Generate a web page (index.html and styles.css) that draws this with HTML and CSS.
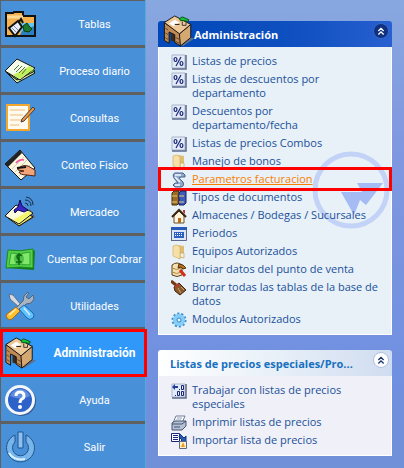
FILE: index.html
```html
<!DOCTYPE html>
<html lang="es">
<head>
    <meta charset="UTF-8">
    <meta name="viewport" content="width=device-width, initial-scale=1.0">
    <title>Administración</title>
    <link rel="stylesheet" href="styles.css">
</head>
<body>
    <!-- Shared drawings -->
    <svg class="defs" width="0" height="0">
        <symbol id="desk" viewBox="0 0 32 34">
            <path d="M18 32l11-8 4 1-12 8z" fill="#5c708f"/>
            <path d="M5 17l8 4v8l-5-2V19z" fill="#3a2a1c"/>
            <path d="M1 8v19l5 3V18l6 3v8l6 4V20z" fill="#c08a55" stroke="#111"/>
            <path d="M17 20l12-10v14l-11 9z" fill="#d5a771" stroke="#111"/>
            <path d="M1 8l11-7 17 9-12 10z" fill="#edc795" stroke="#111"/>
            <path d="M6 9l6-4 5 3-6 4z" fill="#fff"/>
            <path d="M12 10h5" stroke="#111"/>
            <path d="M17 4l3-2 7 3-1 2-4-1-4 0z" fill="#12c43a" stroke="#064d14"/>
            <path d="M20 7v4h4V8" fill="none" stroke="#333"/>
            <path d="M2 14l3 2M2 19l3 2M2 24l3 2M13 24l4 2M13 28l4 2" stroke="#6b4420"/>
        </symbol>
        <symbol id="percent" viewBox="0 0 16 16">
            <path d="M1 1h13v13H1z" fill="#e4eaf6" stroke="#a9b6cd"/>
            <path d="M1 15h14V1" fill="none" stroke="#5c6b8c" stroke-width="1.5"/>
            <path d="M10 3L5 12" stroke="#17267a" stroke-width="1.2"/>
            <ellipse cx="4.5" cy="5.5" rx="1.4" ry="2" fill="none" stroke="#17267a" stroke-width="1.2"/>
            <ellipse cx="10.5" cy="9.5" rx="1.4" ry="2" fill="none" stroke="#17267a" stroke-width="1.2"/>
        </symbol>
        <symbol id="folder" viewBox="0 0 16 16">
            <path d="M7 1l6 1v11l-6 2z" fill="#dfbd70"/>
            <path d="M9 9h4v5l-4-1z" fill="#f4f0da" stroke="#b99955" stroke-width=".6"/>
            <path d="M2 2l4-1 3 2v12l-7-3z" fill="#f6e0a8" stroke="#d3b064" stroke-width=".7"/>
        </symbol>
        <symbol id="chevrons" viewBox="0 0 16 16">
            <path d="M5 8l3-3 3 3M5 12l3-3 3 3" fill="none" stroke="currentColor" stroke-width="1.6"/>
        </symbol>
    </svg>

    <nav class="sidebar">
        <button class="menu-item" type="button">
            <svg class="menu-icon" viewBox="0 0 32 32">
                <path d="M2 5h7l1-1h9v4h12v20H2z" fill="#f4b251" stroke="#111" stroke-width="2"/>
                <path d="M3 9h16" stroke="#ffd995" stroke-width="3"/>
                <path d="M17 15h13v12H17z" fill="#63c7f2"/>
                <path d="M18 23l12-5v9H16z" fill="#2b7fc0"/>
                <path d="M5 20l9-7 4 6-7 9z" fill="#e8edf8" stroke="#111" stroke-width="2"/>
                <path d="M8 20l5 5M10 18l4 4" stroke="#7c8cae"/>
                <path d="M15 14l2-3 2 4" fill="none" stroke="#111" stroke-width="2"/>
                <path d="M19 18l4-3 2 3 3 3-3 3-5-1z" fill="#1d7a2c" stroke="#0a3d12"/>
            </svg>
            <span class="menu-text">Tablas</span>
        </button>
        <button class="menu-item" type="button">
            <svg class="menu-icon" viewBox="0 0 32 32">
                <path d="M3 18l19-9 9 9-18 10z" fill="#cde8a8" stroke="#111"/>
                <path d="M2 17l12-12 17 11-18 9z" fill="#8fd14a" stroke="#111"/>
                <path d="M1 16L13 4l18 9-15 12z" fill="#f4fbe8" stroke="#111"/>
                <path d="M9 20l17-9 4 3-14 10z" fill="#c4ef5c"/>
                <path d="M10 15l5-5M12 17l6-6M15 18l6-6M18 19l4-5" stroke="#53704a"/>
            </svg>
            <span class="menu-text">Proceso diario</span>
        </button>
        <button class="menu-item" type="button">
            <svg class="menu-icon" viewBox="0 0 32 32">
                <path d="M3 3h22v25H3z" fill="#fffaf0" stroke="#f3a72f" stroke-width="2"/>
                <path d="M6 8h15M6 13h13M6 18h15M6 23h9" stroke="#eebc76"/>
                <path d="M29 5L18 17l-1 3 3-1L31 7z" fill="#e89546" stroke="#4b3b35"/>
            </svg>
            <span class="menu-text">Consultas</span>
        </button>
        <button class="menu-item" type="button">
            <svg class="menu-icon" viewBox="0 0 32 32">
                <path d="M1 15L16 1l15 18-14 12z" fill="#fdf6dc" stroke="#111"/>
                <path d="M1 15L16 1l2 3L4 18z" fill="#222"/>
                <path d="M8 20l12-12M11 23l12-12M15 27l11-11" stroke="#c6d0c2"/>
                <path d="M12 14q3-4 8-3" fill="none" stroke="#ef4fa0" stroke-width="1.5"/>
                <path d="M14 19q6-4 10-2l7 4v6l-8-1q-7 0-8-3l5-1-6-1z" fill="#f0a477" stroke="#4e2416"/>
                <path d="M13 19l9-1" stroke="#111" stroke-width="2"/>
            </svg>
            <span class="menu-text">Conteo Fisico</span>
        </button>
        <button class="menu-item" type="button">
            <svg class="menu-icon" viewBox="0 0 32 32">
                <path d="M8 24l18-11 5 8-15 9z" fill="#5b6575"/>
                <path d="M4 22l14-8 11 7-14 9z" fill="#e9e56a" stroke="#111"/>
                <path d="M1 20L12 9l17 8-14 11z" fill="#fafadc" stroke="#111"/>
                <path d="M9 24l16-9 3 2-13 10z" fill="#f5f56a"/>
                <path d="M16 4l2 6 6 4-4 2-6-2-3 3-1-3 4-3z" fill="#3b25c8" stroke="#10084e"/>
                <path d="M21 7q3 0 3 3M21 4q6 0 6 6M22 1q7 1 7 8" fill="none" stroke="#1d2a44"/>
            </svg>
            <span class="menu-text">Mercadeo</span>
        </button>
        <button class="menu-item" type="button">
            <svg class="menu-icon" viewBox="0 0 32 32">
                <path d="M2 25l28 2 1-19-2-1z" fill="#157c19"/>
                <path d="M4 7q12 2 25-1v19q-13-2-27 0z" fill="#55cf49" stroke="#178c1c"/>
                <path d="M7 10q9 2 19-1v13q-10-1-21 0z" fill="#82e66c" stroke="#2ba52c"/>
                <ellipse cx="15" cy="16" rx="5" ry="6" fill="#4cc244"/>
                <path d="M18 13q-2-2-4-1t0 4 3 3-5 0M15 10v12" fill="none" stroke="#0e6614" stroke-width="1.6"/>
            </svg>
            <span class="menu-text">Cuentas por Cobrar</span>
        </button>
        <button class="menu-item" type="button">
            <svg class="menu-icon" viewBox="0 0 32 32">
                <path d="M5 4l4 1 9 11-2 2L6 9z" fill="#d3dae4" stroke="#617086"/>
                <path d="M24 2l-4 4-1 5-7 7 3 3 7-7 5-1 3-4-1-4-4 4-3-2 3-4z" fill="#a9b4c3" stroke="#56657c"/>
                <path d="M12 17l4 4-8 8q-3 2-5-1-2-2 0-4z" fill="#ffc22e" stroke="#a86a12"/>
                <path d="M15 19l5-4 9 8q2 2 0 5-3 3-6 0z" fill="#62c2ff" stroke="#1668b0"/>
                <path d="M5 25l7-6M20 18l6 7" stroke="#fff" stroke-width="1.5" opacity=".7"/>
            </svg>
            <span class="menu-text">Utilidades</span>
        </button>
        <button class="menu-item active" type="button">
            <svg class="menu-icon"><use href="#desk"/></svg>
            <span class="menu-text">Administración</span>
        </button>
        <button class="menu-item" type="button">
            <svg class="menu-icon" viewBox="0 0 32 32">
                <circle cx="17" cy="17" r="15" fill="#345a92"/>
                <circle cx="16" cy="16" r="15" fill="#f3f6fb"/>
                <circle cx="16" cy="16" r="12" fill="#2d62c8"/>
                <path d="M6 12q3-7 10-7t10 7q-8 5-20 0z" fill="#5f8ee0"/>
                <path d="M12 12q0-4 4-4t4 4q0 2-2 3t-2 4" fill="none" stroke="#fff" stroke-width="3"/>
                <circle cx="16" cy="23" r="2" fill="#fff"/>
            </svg>
            <span class="menu-text">Ayuda</span>
        </button>
        <button class="menu-item" type="button">
            <svg class="menu-icon" viewBox="0 0 32 32">
                <path d="M11 4A14 14 0 1 0 22 4v7A8 8 0 1 1 11 11z" fill="#78b5ea" stroke="#20558f"/>
                <path d="M5 22q5 8 16 6" fill="none" stroke="#d6f0ff" stroke-width="2"/>
                <path d="M14 1h5v16h-5z" fill="#8cc0f0" stroke="#20558f"/>
            </svg>
            <span class="menu-text">Salir</span>
        </button>
    </nav>

    <main class="content">
        <section class="panel panel-main">
            <header class="panel-header">
                <svg class="header-icon"><use href="#desk"/></svg>
                <h2>Administración</h2>
                <button class="toggle" type="button" aria-label="Contraer"><svg><use href="#chevrons"/></svg></button>
            </header>
            <div class="panel-body">
                <svg class="watermark" viewBox="0 0 78 78">
                    <circle cx="39" cy="39" r="36" fill="none" stroke="#c3d2f7" stroke-width="5"/>
                    <path d="M45 32h26L54 54l-6-5-6 15-13-23h21z" fill="#a4bbf4"/>
                </svg>
                <ul class="links">
                    <li><svg><use href="#percent"/></svg><a href="#">Listas de precios</a></li>
                    <li><svg><use href="#percent"/></svg><a href="#">Listas de descuentos por departamento</a></li>
                    <li><svg><use href="#percent"/></svg><a href="#">Descuentos por departamento/fecha</a></li>
                    <li><svg><use href="#percent"/></svg><a href="#">Listas de precios Combos</a></li>
                    <li><svg><use href="#folder"/></svg><a href="#">Manejo de bonos</a></li>
                    <li class="current">
                        <svg viewBox="0 0 16 16">
                            <path d="M4 1h8l2 2v2h-4l-2 1 4 4q2 5-3 5H4l-2-2 2-2h3L3 6Q1 2 4 1z" fill="#8fa9cc" stroke="#4a6186"/>
                            <path d="M4 3h6M4 5l5 5M4 13h5" stroke="#f2f7ff" stroke-width="1.5"/>
                        </svg>
                        <a href="#">Parametros facturacion</a>
                    </li>
                    <li>
                        <svg viewBox="0 0 16 16">
                            <path d="M1 3l2-2h5v12l-2 2H1z" fill="#9a6b26" stroke="#3f2c14"/>
                            <path d="M8 3l2-2h5v12l-2 2H8z" fill="#3b5bbd" stroke="#14235c"/>
                            <path d="M1 6h5M1 12h5M8 6h5M8 12h5" stroke="#e9ce72"/>
                        </svg>
                        <a href="#">Tipos de documentos</a>
                    </li>
                    <li>
                        <svg viewBox="0 0 16 16">
                            <path d="M3 8l5-5 5 5v7H3z" fill="#fff3d8" stroke="#6b5030"/>
                            <path d="M1 9l7-7 7 7" fill="none" stroke="#3a2412" stroke-width="2"/>
                            <path d="M12 2h2v4l-2-2z" fill="#b3382c"/>
                            <path d="M7 10h3v5H7z" fill="#b36b1d"/>
                        </svg>
                        <a href="#">Almacenes / Bodegas / Sucursales</a>
                    </li>
                    <li>
                        <svg viewBox="0 0 16 16">
                            <path d="M0 1h16v14H0z" fill="#dce6f5"/>
                            <path d="M0 1h16v3H0z" fill="#2858b8"/>
                            <path d="M0 14.5h15.5V4M.5 4v10" fill="none" stroke="#5a6a88"/>
                            <path d="M3 6h10v6H3z" fill="#2a5fc5"/>
                            <path d="M4 7.5h8M4 9.5h8" stroke="#fff" stroke-dasharray="1 1"/>
                        </svg>
                        <a href="#">Periodos</a>
                    </li>
                    <li><svg><use href="#folder"/></svg><a href="#">Equipos Autorizados</a></li>
                    <li>
                        <svg viewBox="0 0 16 16">
                            <path d="M1 3q5-4 10 0v10q-5 3-10 0z" fill="#f3dfb0" stroke="#5b4220"/>
                            <path d="M1 6q5 3 9 0M1 10q5 3 9 0" fill="none" stroke="#b58a42"/>
                            <path d="M8 2l4 1 3 3-3 1-2-2-3 1z" fill="#b7741d" stroke="#53310c"/>
                            <path d="M9 8l5 6" stroke="#d32d1c" stroke-width="3"/>
                        </svg>
                        <a href="#">Iniciar datos del punto de venta</a>
                    </li>
                    <li>
                        <svg viewBox="0 0 16 16">
                            <path d="M0 1l5 4" stroke="#703c17" stroke-width="3"/>
                            <path d="M3 7l5-4 7 7-6 5-5-4z" fill="#8b5a2c" stroke="#3f2411"/>
                            <path d="M4 7l4-3" stroke="#c4352b" stroke-width="2"/>
                            <path d="M7 8l3 5M10 7l3 3" stroke="#d1a268"/>
                        </svg>
                        <a href="#">Borrar todas las tablas de la base de datos</a>
                    </li>
                    <li>
                        <svg viewBox="0 0 16 16">
                            <circle cx="8" cy="8" r="6" fill="#6fbdf0" stroke="#3c8fd0" stroke-width="3" stroke-dasharray="2 1.7"/>
                            <circle cx="8" cy="8" r="6" fill="#86cdf8"/>
                            <circle cx="8" cy="8" r="2" fill="#e8f6ff" stroke="#3583c4"/>
                        </svg>
                        <a href="#">Modulos Autorizados</a>
                    </li>
                </ul>
            </div>
        </section>

        <section class="panel panel-extra">
            <header class="panel-header">
                <h2>Listas de precios especiales/Pro...</h2>
                <button class="toggle" type="button" aria-label="Contraer"><svg><use href="#chevrons"/></svg></button>
            </header>
            <div class="panel-body">
                <ul class="links">
                    <li>
                        <svg viewBox="0 0 16 16">
                            <path d="M1 1h13v13H1z" fill="#e4eaf6" stroke="#a9b6cd"/>
                            <path d="M1 15h14V1" fill="none" stroke="#5c6b8c" stroke-width="1.5"/>
                            <path d="M1 4l3-3v2h3v2H4v2z" fill="#1d3f9c"/>
                            <path d="M10.5 2.5h2v4h-2zM6.5 8.5h2v4h-2zM10.5 8.5h2v4h-2z" fill="none" stroke="#17267a"/>
                            <path d="M8 6.5h1M4 12.5h1" stroke="#17267a"/>
                        </svg>
                        <a href="#">Trabajar con listas de precios especiales</a>
                    </li>
                    <li>
                        <svg viewBox="0 0 16 16">
                            <path d="M5 1h9l-3 7H2z" fill="#fff" stroke="#6d7c96"/>
                            <path d="M1 8l3-2h11v5l-4 4H1z" fill="#b4c1d6" stroke="#46556e"/>
                            <path d="M1 9h10l4-3M3 12h6" fill="none" stroke="#46556e"/>
                            <path d="M6 3h5M5 5h5" stroke="#8fa0bb"/>
                        </svg>
                        <a href="#">Imprimir listas de precios</a>
                    </li>
                    <li>
                        <svg viewBox="0 0 16 16">
                            <path d="M.5 .5h8v8h-8z" fill="#fff" stroke="#17267a"/>
                            <path d="M2 2.5h5M2 4.5h5M2 6.5h5" stroke="#17267a"/>
                            <path d="M9 1l4 4 2-2v6H9l2-2-3-3z" fill="#2858b8" stroke="#17367a"/>
                            <path d="M8.5 8.5h7v7h-7z" fill="#fff3cf" stroke="#5a6a88"/>
                            <path d="M12 9l2 5h-4z" fill="#ee9a1c"/>
                        </svg>
                        <a href="#">Importar lista de precios</a>
                    </li>
                </ul>
            </div>
        </section>
    </main>
</body>
</html>
```
FILE: styles.css
```css
* {
    box-sizing: border-box;
    margin: 0;
    padding: 0;
}

body {
    display: flex;
    min-height: 100vh;
    font-family: 'Open Sans', sans-serif;
    font-size: 11px;
    background: #7090dc;
}

button {
    border: none;
    font: inherit;
    cursor: pointer;
}

.defs {
    position: absolute;
}

/* Left menu */
.sidebar {
    flex: none;
    width: 146px;
    display: flex;
    flex-direction: column;
    gap: 3px;
    padding: 1px 0 0 1px;
    background: #606060;
    border-right: 1px solid #58a8dc;
}

.menu-item {
    height: 44px;
    display: flex;
    align-items: center;
    padding: 2px 0 0 3px;
    background: #4890d8;
    color: #fff;
    font-family: Roboto, sans-serif;
    font-size: 11px;
}

.menu-icon {
    flex: none;
    width: 32px;
    height: 32px;
}

.menu-text {
    flex: 1;
    text-align: center;
    white-space: nowrap;
    padding-left: 8px;
}

.menu-item.active {
    position: relative;
    background: #3098f8;
    font-size: 12px;
    font-weight: bold;
}

.menu-item.active::after {
    content: '';
    position: absolute;
    inset: -1px -2px -3px -1px;
    border: 3px solid #f00;
}

/* Right area */
.content {
    flex: 1;
    min-width: 0;
    display: flex;
    flex-direction: column;
    gap: 15px;
    padding: 21px 12px 12px;
    background: linear-gradient(#88a8e0, #8098e0 30%, #7090e0 80%, #7090d8);
}

.panel-header {
    height: 26px;
    display: flex;
    align-items: center;
    justify-content: space-between;
    padding: 0 3px 0 12px;
    border-radius: 3px 3px 0 0;
}

.panel-header h2 {
    flex: 1;
    font-size: 11px;
    white-space: nowrap;
}

.panel-body {
    position: relative;
    border: 1px solid #fff;
    border-top: none;
    padding: 7px 12px 8px;
}

.panel-main .panel-header {
    padding-left: 5px;
    background: linear-gradient(90deg, #0048b8, #1050c0 60%, #2860d0);
    color: #fff;
}

.panel-main .panel-body {
    background: #e8f0f8;
}

.panel-extra .panel-header {
    background: linear-gradient(90deg, #fff, #e8f0f8 50%, #d0dcf0);
    color: #1870c0;
}

.panel-extra .panel-body {
    background: #f0f0f8;
}

.header-icon {
    width: 31px;
    height: 32px;
    margin-top: -6px;
}

.toggle {
    align-self: flex-start;
    width: 16px;
    height: 16px;
    margin-top: 2px;
    border: 1px solid #b0c0e0;
    border-radius: 50%;
    background: #fff;
    color: #183070;
}

.panel-main .toggle {
    border-color: #3868c8;
    background: #103080;
    color: #fff;
}

.toggle svg {
    display: block;
    width: 14px;
    height: 14px;
}

.watermark {
    position: absolute;
    top: 104px;
    right: 1px;
    width: 78px;
    height: 78px;
}

.links {
    position: relative;
    display: flex;
    flex-direction: column;
    gap: 4px;
    list-style: none;
}

.links li {
    display: flex;
    gap: 5px;
    line-height: 14px;
}

.links svg {
    flex: none;
    width: 16px;
    height: 16px;
    margin-bottom: -2px;
}

.links a {
    color: #205098;
    text-decoration: none;
}

.links .current {
    margin: 0 -8px;
    padding: 0 8px;
    outline: 3px solid #f00;
    outline-offset: 2px;
}

.links .current a {
    color: #f88000;
    text-decoration: underline;
}
```
